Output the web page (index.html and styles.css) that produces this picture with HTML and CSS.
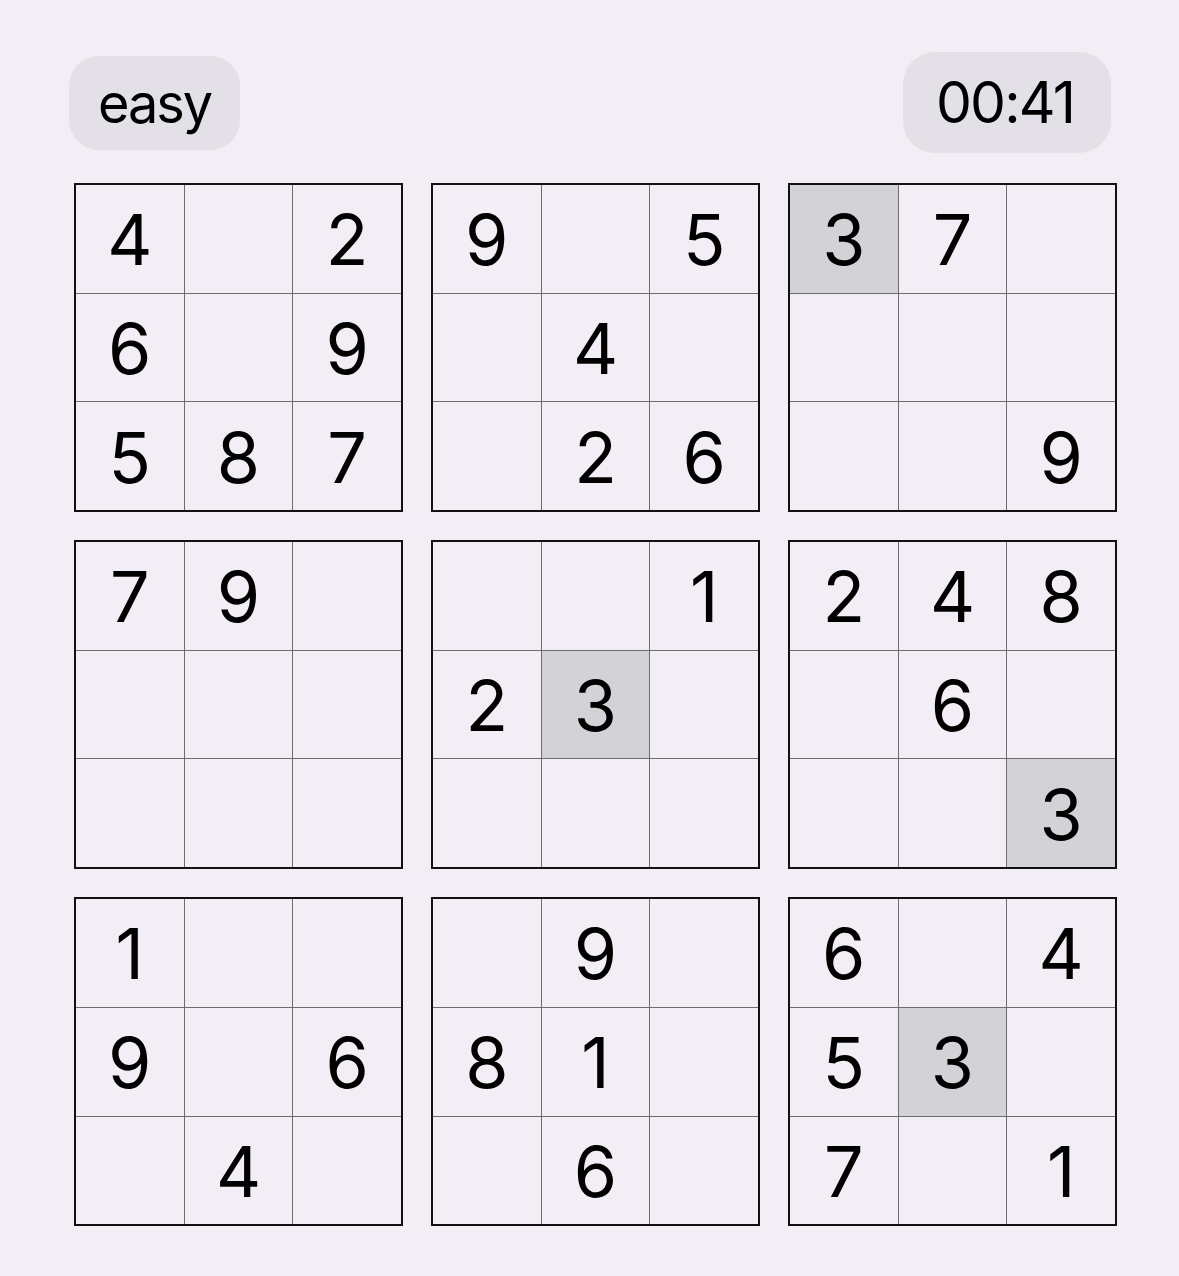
FILE: index.html
```html
<!DOCTYPE html>
<html lang="en">

<head>
  <meta charset="UTF-8">
  <meta name="viewport" content="width=device-width, initial-scale=1.0">
  <title>sudoku</title>
  <link rel="stylesheet" href="styles.css">
</head>

<body>
  <div class="header">
    <div class="pill level">easy</div>
    <div class="pill timer">00:41</div>
  </div>

  <div class="board">
    <div class="box">
      <div class="cell">4</div><div class="cell"></div><div class="cell">2</div>
      <div class="cell">6</div><div class="cell"></div><div class="cell">9</div>
      <div class="cell">5</div><div class="cell">8</div><div class="cell">7</div>
    </div>
    <div class="box">
      <div class="cell">9</div><div class="cell"></div><div class="cell">5</div>
      <div class="cell"></div><div class="cell">4</div><div class="cell"></div>
      <div class="cell"></div><div class="cell">2</div><div class="cell">6</div>
    </div>
    <div class="box">
      <div class="cell same">3</div><div class="cell">7</div><div class="cell"></div>
      <div class="cell"></div><div class="cell"></div><div class="cell"></div>
      <div class="cell"></div><div class="cell"></div><div class="cell">9</div>
    </div>

    <div class="box">
      <div class="cell">7</div><div class="cell">9</div><div class="cell"></div>
      <div class="cell"></div><div class="cell"></div><div class="cell"></div>
      <div class="cell"></div><div class="cell"></div><div class="cell"></div>
    </div>
    <div class="box">
      <div class="cell"></div><div class="cell"></div><div class="cell">1</div>
      <div class="cell">2</div><div class="cell same">3</div><div class="cell"></div>
      <div class="cell"></div><div class="cell"></div><div class="cell"></div>
    </div>
    <div class="box">
      <div class="cell">2</div><div class="cell">4</div><div class="cell">8</div>
      <div class="cell"></div><div class="cell">6</div><div class="cell"></div>
      <div class="cell"></div><div class="cell"></div><div class="cell same">3</div>
    </div>

    <div class="box">
      <div class="cell">1</div><div class="cell"></div><div class="cell"></div>
      <div class="cell">9</div><div class="cell"></div><div class="cell">6</div>
      <div class="cell"></div><div class="cell">4</div><div class="cell"></div>
    </div>
    <div class="box">
      <div class="cell"></div><div class="cell">9</div><div class="cell"></div>
      <div class="cell">8</div><div class="cell">1</div><div class="cell"></div>
      <div class="cell"></div><div class="cell">6</div><div class="cell"></div>
    </div>
    <div class="box">
      <div class="cell">6</div><div class="cell"></div><div class="cell">4</div>
      <div class="cell">5</div><div class="cell same">3</div><div class="cell"></div>
      <div class="cell">7</div><div class="cell"></div><div class="cell">1</div>
    </div>
  </div>
</body>

</html>
```

FILE: styles.css
```css
/* page */
body {
  font-family: Inter, "Liberation Sans", Arial, sans-serif;
  background-color: #f3eef5;
  color: #000;
  margin: 0;
  padding-top: 52px;
}

/* top bar */
.header {
  display: flex;
  justify-content: space-between;
  align-items: center;
  padding: 0 68px 0 69px;
  height: 101px;
}

.pill {
  background-color: #e4e0e7;
  display: flex;
  align-items: center;
  justify-content: center;
}

.level {
  width: 171px;
  height: 94px;
  border-radius: 30px;
  font-size: 54px;
  letter-spacing: -2px;
  padding-top: 2px;
  box-sizing: border-box;
}

.timer {
  width: 208px;
  height: 101px;
  border-radius: 32px;
  font-size: 57px;
  letter-spacing: -1.8px;
  padding-right: 4px;
  box-sizing: border-box;
}

/* sudoku board */
.board {
  display: grid;
  grid-template-columns: repeat(3, 329px);
  gap: 28px;
  margin: 30px 0 0 74px;
}

.box {
  display: grid;
  grid-template-columns: repeat(3, 1fr);
  grid-template-rows: repeat(3, 107.7px);
  gap: 1px;
  background-color: #6d6c70;
  border: 2px solid #111;
}

.cell {
  background-color: #f3eef5;
  display: flex;
  align-items: center;
  justify-content: center;
  font-size: 70px;
  padding-top: 2px;
}

.cell.same {
  background-color: #d3d2d7;
}
```
